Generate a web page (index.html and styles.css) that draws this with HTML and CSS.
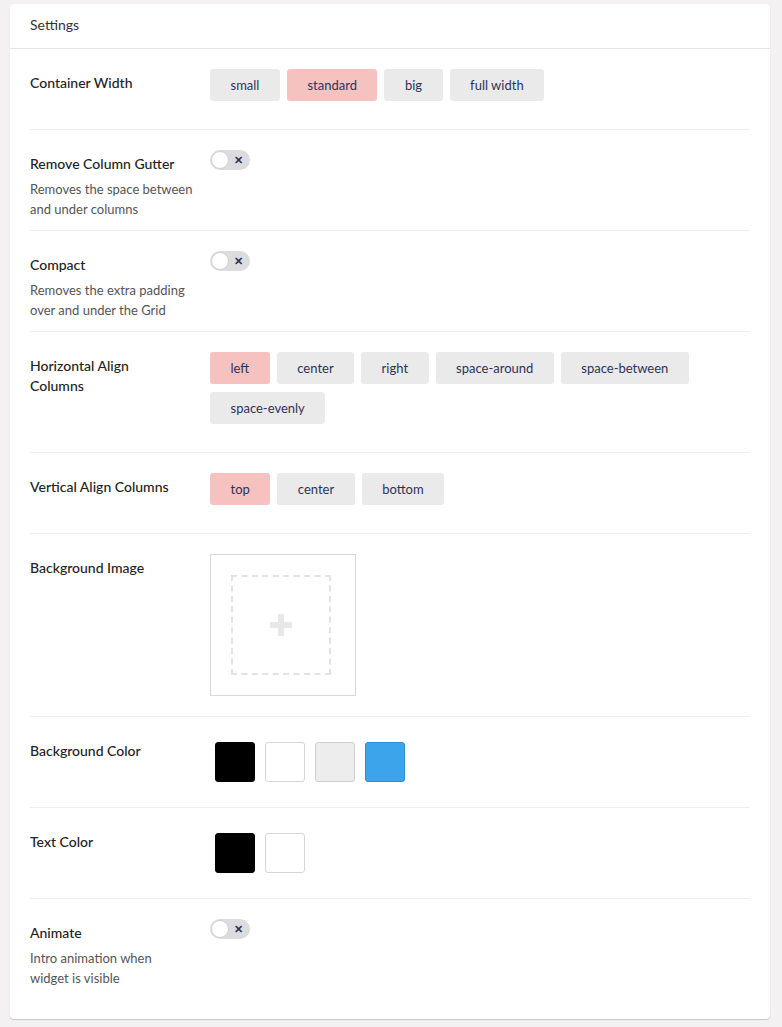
FILE: index.html
```html
<!DOCTYPE html>
<html>
<head>
<meta charset="utf-8">
<link rel="stylesheet" href="styles.css">
</head>
<body>
<div class="card">
  <div class="card-header">Settings</div>
  <div class="card-body">
    <div class="row">
      <div class="label-col"><div class="label">Container Width</div></div>
      <div class="control-col">
        <div class="btns">
          <span class="btn">small</span>
          <span class="btn active">standard</span>
          <span class="btn">big</span>
          <span class="btn">full width</span>
        </div>
      </div>
    </div>
    <div class="row">
      <div class="label-col">
        <div class="label">Remove Column Gutter</div>
        <div class="desc">Removes the space between and under columns</div>
      </div>
      <div class="control-col">
        <span class="toggle"><span class="knob"></span><span class="x">✕</span></span>
      </div>
    </div>
    <div class="row">
      <div class="label-col">
        <div class="label">Compact</div>
        <div class="desc">Removes the extra padding over and under the Grid</div>
      </div>
      <div class="control-col">
        <span class="toggle"><span class="knob"></span><span class="x">✕</span></span>
      </div>
    </div>
    <div class="row">
      <div class="label-col"><div class="label">Horizontal Align Columns</div></div>
      <div class="control-col">
        <div class="btns">
          <span class="btn active">left</span>
          <span class="btn">center</span>
          <span class="btn">right</span>
          <span class="btn">space-around</span>
          <span class="btn">space-between</span>
          <span class="btn">space-evenly</span>
        </div>
      </div>
    </div>
    <div class="row">
      <div class="label-col"><div class="label">Vertical Align Columns</div></div>
      <div class="control-col">
        <div class="btns">
          <span class="btn active">top</span>
          <span class="btn">center</span>
          <span class="btn">bottom</span>
        </div>
      </div>
    </div>
    <div class="row">
      <div class="label-col"><div class="label">Background Image</div></div>
      <div class="control-col">
        <div class="image-box">
          <div class="image-drop">
            <svg width="24" height="24" viewBox="0 0 24 24"><path d="M9 1h6v8h8v6h-8v8H9v-8H1V9h8z" fill="#e8e8e8"/></svg>
          </div>
        </div>
      </div>
    </div>
    <div class="row">
      <div class="label-col"><div class="label">Background Color</div></div>
      <div class="control-col">
        <div class="swatches">
          <span class="swatch black"></span>
          <span class="swatch white"></span>
          <span class="swatch grey"></span>
          <span class="swatch blue"></span>
        </div>
      </div>
    </div>
    <div class="row">
      <div class="label-col"><div class="label">Text Color</div></div>
      <div class="control-col">
        <div class="swatches">
          <span class="swatch black"></span>
          <span class="swatch white"></span>
        </div>
      </div>
    </div>
    <div class="row last">
      <div class="label-col">
        <div class="label">Animate</div>
        <div class="desc">Intro animation when widget is visible</div>
      </div>
      <div class="control-col">
        <span class="toggle"><span class="knob"></span><span class="x">✕</span></span>
      </div>
    </div>
  </div>
</div>
</body>
</html>
```
FILE: styles.css
```css
html, body {
  margin: 0;
  padding: 0;
  background: #f3f1f2;
  font-family: Lato, "Open Sans", sans-serif;
}
body {
  padding: 4px 12px 8px 10px;
}
.card {
  background: #fff;
  border-radius: 4px;
  box-shadow: 0 1px 1px rgba(0, 0, 0, 0.18);
}
.card-header {
  height: 45px;
  box-sizing: border-box;
  padding: 0 20px 3px;
  display: flex;
  align-items: center;
  font-size: 14px;
  color: #333;
  border-bottom: 1px solid #e4e4e4;
}
.card-body {
  padding: 0 20px 20px;
}
.row {
  display: flex;
  padding: 20px 0 12px;
  border-bottom: 1px solid #eeeeee;
}
.row.last {
  border-bottom: none;
}
.label-col {
  width: 180px;
  flex: none;
}
.label {
  max-width: 150px;
  margin-top: 4px;
  font-size: 14px;
  line-height: 20px;
  font-weight: 500;
  color: #222;
}
.desc {
  width: 163.5px;
  margin-top: 5px;
  margin-bottom: -1px;
  font-size: 13px;
  line-height: 20px;
  color: #555;
}
.control-col {
  flex: 1;
  padding-bottom: 8px;
}
.btns {
  display: flex;
  flex-wrap: wrap;
  gap: 8px 7px;
  padding-bottom: 8px;
}
.btn {
  height: 32px;
  box-sizing: border-box;
  padding: 0 20.5px;
  display: inline-flex;
  align-items: center;
  background: #eaeaeb;
  border-radius: 3px;
  font-size: 13px;
  color: #2d3356;
}
.btn.active {
  background: #f5c2bf;
}
.toggle {
  display: inline-flex;
  align-items: center;
  width: 40px;
  height: 20px;
  border-radius: 10px;
  background: #dcdcdf;
  position: relative;
}
.knob {
  position: absolute;
  left: 1px;
  top: 1px;
  width: 18px;
  height: 18px;
  box-sizing: border-box;
  border-radius: 50%;
  background: #fff;
  border: 1px solid #d0d0d3;
}
.x {
  position: absolute;
  left: 24px;
  top: 2px;
  font-size: 11px;
  line-height: 15px;
  font-weight: 700;
  color: #2d3356;
}
.image-box {
  width: 146px;
  height: 142px;
  box-sizing: border-box;
  border: 1px solid #d8d8d8;
  padding: 20px 24px 20px 20px;
}
.image-drop {
  width: 100px;
  height: 100px;
  box-sizing: border-box;
  border: 2px dashed #e2e2e2;
  display: flex;
  align-items: center;
  justify-content: center;
}
.swatches {
  display: flex;
  gap: 10px;
  padding: 5px;
}
.swatch {
  width: 40px;
  height: 40px;
  box-sizing: border-box;
  border-radius: 3px;
  border: 1px solid #d6d6d6;
}
.swatch.black {
  background: #000;
  border-color: #000;
}
.swatch.white {
  background: #fff;
}
.swatch.grey {
  background: #ededed;
  border-color: #cfcfcf;
}
.swatch.blue {
  background: #3ca4eb;
  border-color: #2e8fd3;
}
```
